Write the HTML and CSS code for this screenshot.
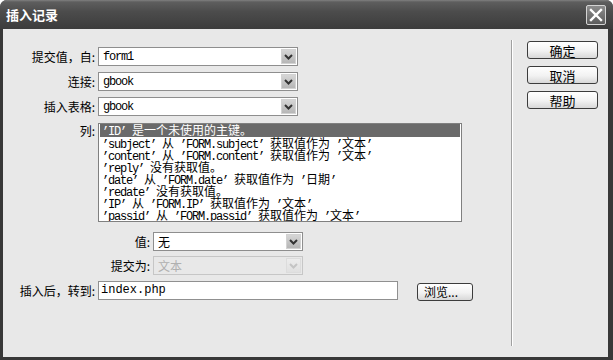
FILE: index.html
```html
<!DOCTYPE html>
<html lang="zh-CN">
<head>
<meta charset="utf-8">
<title>插入记录</title>
<link rel="stylesheet" href="styles.css">
</head>
<body>
<div class="dialog">
  <div class="titlebar">
    <span class="title">插入记录</span>
    <div class="close"><svg width="14" height="14" viewBox="0 0 14 14"><path d="M2 2 L12 12 M12 2 L2 12" stroke="#fff" stroke-width="2.4" stroke-linecap="square" fill="none"/></svg></div>
  </div>
  <div class="body">
    <div class="form">
      <div class="row">
        <span class="lab">提交值，自:</span>
        <div class="sel w200"><span class="val mono">form1</span><span class="arr"><svg width="9" height="6" viewBox="0 0 9 6"><path d="M1 1 L4.5 4.5 L8 1" stroke="#333" stroke-width="2" fill="none"/></svg></span></div>
      </div>
      <div class="row">
        <span class="lab">连接:</span>
        <div class="sel w200"><span class="val mono">gbook</span><span class="arr"><svg width="9" height="6" viewBox="0 0 9 6"><path d="M1 1 L4.5 4.5 L8 1" stroke="#333" stroke-width="2" fill="none"/></svg></span></div>
      </div>
      <div class="row">
        <span class="lab">插入表格:</span>
        <div class="sel w200"><span class="val mono">gbook</span><span class="arr"><svg width="9" height="6" viewBox="0 0 9 6"><path d="M1 1 L4.5 4.5 L8 1" stroke="#333" stroke-width="2" fill="none"/></svg></span></div>
      </div>
      <div class="row row-list">
        <span class="lab lab-list">列:</span>
        <div class="list">
          <div class="item selected">’ID’ <span class="c">是一个未使用的主键。</span></div>
          <div class="item">’subject’ <span class="c">从</span> ’FORM.subject’ <span class="c">获取值作为</span> ’<span class="c">文本</span>’</div>
          <div class="item">’content’ <span class="c">从</span> ’FORM.content’ <span class="c">获取值作为</span> ’<span class="c">文本</span>’</div>
          <div class="item">’reply’ <span class="c">没有获取值。</span></div>
          <div class="item">’date’ <span class="c">从</span> ’FORM.date’ <span class="c">获取值作为</span> ’<span class="c">日期</span>’</div>
          <div class="item">’redate’ <span class="c">没有获取值。</span></div>
          <div class="item">’IP’ <span class="c">从</span> ’FORM.IP’ <span class="c">获取值作为</span> ’<span class="c">文本</span>’</div>
          <div class="item">’passid’ <span class="c">从</span> ’FORM.passid’ <span class="c">获取值作为</span> ’<span class="c">文本</span>’</div>
        </div>
      </div>
      <div class="row row-val">
        <span class="lab lab-wide">值:</span>
        <div class="sel w150"><span class="val cjk">无</span><span class="arr"><svg width="9" height="6" viewBox="0 0 9 6"><path d="M1 1 L4.5 4.5 L8 1" stroke="#333" stroke-width="2" fill="none"/></svg></span></div>
      </div>
      <div class="row row-sub">
        <span class="lab lab-wide">提交为:</span>
        <div class="sel w150 disabled"><span class="val cjk">文本</span><span class="arr"><svg width="9" height="6" viewBox="0 0 9 6"><path d="M1 1 L4.5 4.5 L8 1" stroke="#c4c4c4" stroke-width="2" fill="none"/></svg></span></div>
      </div>
      <div class="row row-go">
        <span class="lab">插入后，转到:</span>
        <div class="input">index.php</div>
        <div class="btn browse">浏览...</div>
      </div>
    </div>
    <div class="sep"></div>
    <div class="side">
      <div class="btn">确定</div>
      <div class="btn">取消</div>
      <div class="btn">帮助</div>
    </div>
  </div>
</div>
</body>
</html>
```

FILE: styles.css
```css
html, body {
  margin: 0;
  padding: 0;
  background: #ffffff;
}

.dialog {
  width: 613px;
  height: 360px;
  box-sizing: border-box;
  background: #383838;
  border-radius: 7px 7px 0 0;
  display: flex;
  flex-direction: column;
  overflow: hidden;
  font-family: "Noto Sans CJK SC", "Liberation Sans", sans-serif;
}

.titlebar {
  height: 29px;
  flex: none;
  display: flex;
  align-items: center;
  justify-content: space-between;
  padding: 0 7px 0 6px;
  background: linear-gradient(#808080 0, #5e5e5e 2px, #4c4c4c 40%, #3c3c3c 100%);
}

.title {
  color: #ffffff;
  font-size: 13px;
  font-weight: bold;
  line-height: 15px;
}

.close {
  width: 20px;
  height: 20px;
  box-sizing: border-box;
  border: 1px solid #d4d4d4;
  border-radius: 2px;
  background: linear-gradient(#8c8c8c, #5c5c5c);
  display: flex;
  align-items: center;
  justify-content: center;
}

.body {
  flex: 1;
  display: flex;
  margin: 0 5px 3px 3px;
  background: #e8e8e8;
}

.form {
  width: 508px;
  flex: none;
  padding-top: 18px;
  box-sizing: border-box;
}

.row {
  display: flex;
  align-items: center;
  height: 19px;
  margin-top: 6px;
}

.row:first-child {
  margin-top: 0;
}

.row-list {
  height: auto;
  align-items: flex-start;
  margin-top: 7px;
}

.row-val {
  margin-top: 10px;
}

.row-sub {
  margin-top: 5px;
}

.row-go {
  margin-top: 6px;
}

.lab {
  width: 92px;
  margin-right: 3px;
  flex: none;
  text-align: right;
  font-size: 12px;
  line-height: 14px;
  color: #000000;
  white-space: nowrap;
}

.lab-wide {
  width: 147px;
}

.lab-list {
  margin-top: 1px;
}

.sel {
  box-sizing: border-box;
  height: 19px;
  border: 1px solid #8e8e8e;
  background: #ffffff;
  display: flex;
  align-items: center;
  padding: 1px;
}

.w200 {
  width: 200px;
}

.w150 {
  width: 150px;
}

.val {
  flex: 1;
  padding-left: 3px;
  color: #000000;
  white-space: nowrap;
}

.mono {
  font-family: "Liberation Mono", monospace;
  font-size: 12px;
  letter-spacing: -1.2px;
}

.cjk {
  font-family: "Noto Sans CJK SC", sans-serif;
  font-size: 12px;
}

.arr {
  width: 15px;
  height: 15px;
  box-sizing: border-box;
  border: 1px solid #d2d2d2;
  background: linear-gradient(#d6d6d6, #b6b6b6);
  display: flex;
  align-items: center;
  justify-content: center;
}

.disabled {
  border-color: #c6c6c6;
  background: #e8e8e8;
}

.disabled .val {
  color: #b0b0b0;
}

.disabled .arr {
  border-color: #dcdcdc;
  background: linear-gradient(#ececec, #e0e0e0);
}

.list {
  width: 364px;
  height: 99px;
  box-sizing: border-box;
  border: 1px solid #808080;
  background: #ffffff;
  padding: 0 1px;
  overflow: hidden;
  font-family: "Liberation Mono", monospace;
  font-size: 12px;
  letter-spacing: -1.2px;
  line-height: 12px;
  color: #000000;
}

.item {
  height: 12px;
  padding-left: 2px;
  white-space: nowrap;
}

.item.selected {
  height: 13px;
  background: #6a6a6a;
  color: #ffffff;
}

.c {
  font-family: "Noto Sans CJK SC", sans-serif;
  font-size: 12px;
  letter-spacing: 0;
}

.input {
  width: 300px;
  height: 19px;
  box-sizing: border-box;
  border: 1px solid #909090;
  background: #ffffff;
  padding-left: 2px;
  font-family: "Liberation Mono", monospace;
  font-size: 12px;
  line-height: 17px;
  color: #000000;
}

.btn {
  width: 71px;
  height: 18px;
  box-sizing: border-box;
  border: 1px solid #3c3c3c;
  border-radius: 3px;
  background: linear-gradient(#ffffff, #f2f2f2 55%, #d8d8d8);
  display: flex;
  align-items: center;
  justify-content: center;
  font-size: 13px;
  color: #000000;
  margin-top: 7px;
}

.btn:first-child {
  margin-top: 0;
}

.browse {
  width: 56px;
  margin: 2px 0 0 19px;
  justify-content: flex-start;
  padding-left: 6px;
  font-size: 12px;
}

.sep {
  width: 0;
  flex: none;
  margin: 11px 0;
  border-left: 1px solid #a0a0a0;
  border-right: 1px solid #ffffff;
}

.side {
  padding: 12px 0 0 14px;
  display: flex;
  flex-direction: column;
}
```
